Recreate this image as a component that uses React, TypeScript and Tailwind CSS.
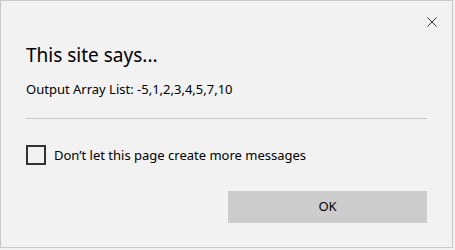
export default function App() {
  return (
    <div className="w-[455px] h-[250px] bg-[#f2f2f2]">
      <div
        className="w-[453px] h-[248px] border border-[#c8c8c8] bg-[#f2f2f2] flex flex-col text-[#000]"
        style={{ fontFamily: '"Noto Sans", "Open Sans", sans-serif' }}
      >
        {/* close button row */}
        <div className="flex justify-end pt-[16px] pr-[15px] h-[40px]">
          <svg width="10" height="10" viewBox="0 0 10 10">
            <path d="M0.5 0.5 L9.5 9.5 M9.5 0.5 L0.5 9.5" stroke="#333" strokeWidth="1" />
          </svg>
        </div>

        <div className="px-[25px]">
          <h1 className="text-[19px] leading-[28px] font-normal">This site says...</h1>
          <p className="text-[13px] leading-[18px] mt-[11px]">Output Array List: -5,1,2,3,4,5,7,10</p>
          <div className="h-px bg-[#c8c8c8] mt-[20px]" />

          <label className="flex items-center gap-[8px] mt-[26px]">
            <span className="w-[20px] h-[20px] border-2 border-[#333] box-border" />
            <span className="text-[13px] leading-[18px]">Don’t let this page create more messages</span>
          </label>

          <div className="flex justify-end mt-[26px]">
            <button className="w-[199px] h-[32px] bg-[#cccccc] text-[13px] text-black">OK</button>
          </div>
        </div>
      </div>
    </div>
  )
}
